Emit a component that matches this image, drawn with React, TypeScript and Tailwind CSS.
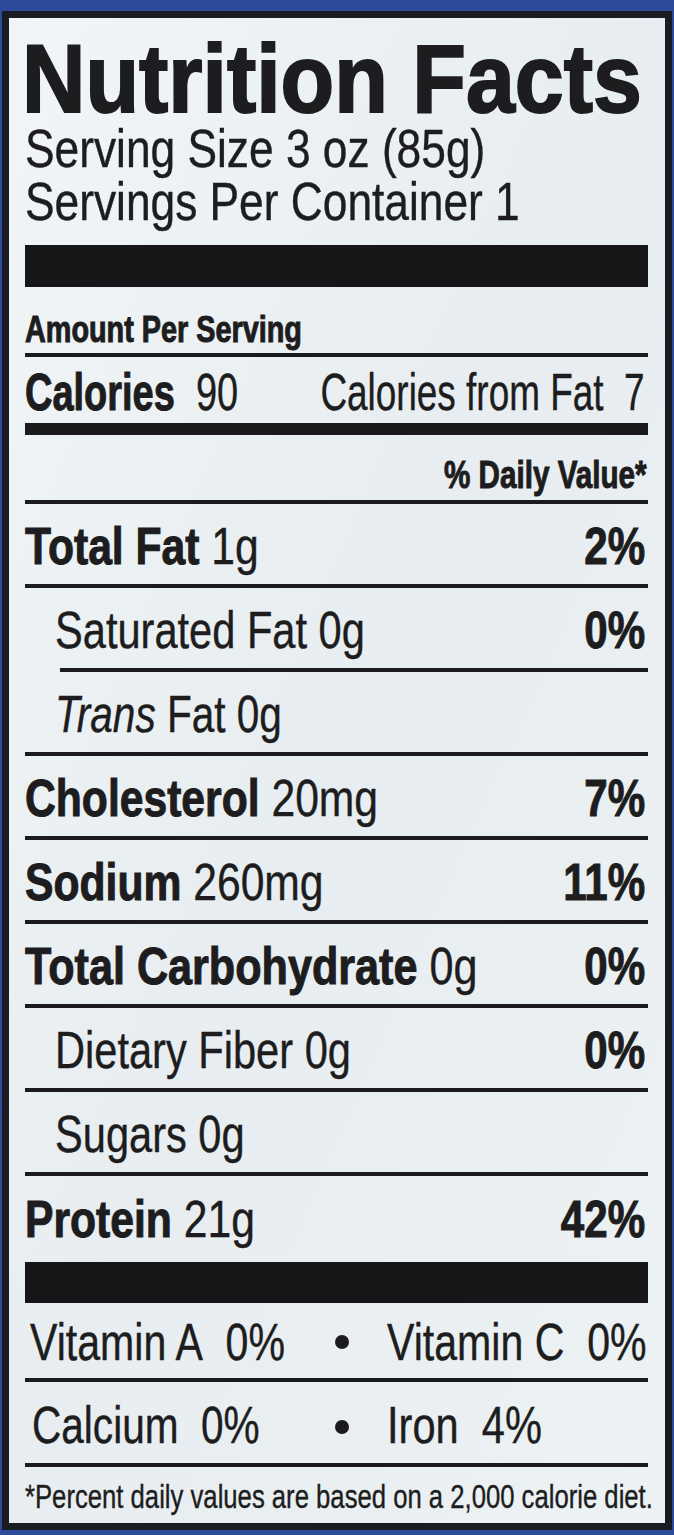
import React from 'react'

interface RowProps {
  left: React.ReactNode
  right?: string
  indent?: boolean
  scale?: string
}

const Rule = ({ className = '' }: { className?: string }) => (
  <div className={`h-[4px] bg-[#1b1b1d] ${className}`} />
)

const B = ({ children }: { children: React.ReactNode }) => (
  <b className="font-bold [-webkit-text-stroke:1px_#1d1d20]">{children}</b>
)

const NutrientRow = ({ left, right, indent, scale = 'scale-x-[0.82]' }: RowProps) => (
  <div className="flex h-[80px] items-end pb-[12px] text-[52px] leading-none">
    <div className={`min-w-0 flex-1 ${indent ? 'pl-[30px]' : ''}`}>
      <span className={`inline-block origin-left whitespace-nowrap ${scale}`}>{left}</span>
    </div>
    {right && (
      <div className="shrink-0 pr-[3px]">
        <span className="inline-block origin-right scale-x-[0.81] whitespace-nowrap">
          <B>{right}</B>
        </span>
      </div>
    )}
  </div>
)

const Bullet = ({ className = '' }: { className?: string }) => (
  <div className={`h-[14px] w-[14px] shrink-0 rounded-full bg-[#1b1b1d] ${className}`} />
)

export default function App() {
  return (
    <div className="h-[1535px] w-[674px] overflow-hidden bg-[#2c4b9a] px-[2px] pt-[11px] font-['Liberation_Sans',Arial,sans-serif] text-[#1d1d20] [-webkit-text-stroke:0.4px_#1d1d20]">
      <div className="h-[1519px] w-[670px] border-[7px] border-[#1a1c24] bg-linear-to-br from-[#f1f5f7] via-[#e7edf0] to-[#edf2f4] pl-[16px] pr-[17px]">
        {/* header */}
        <div className="-ml-[3px] mt-[18px] text-[96px] font-bold leading-[86px]">
          <span className="inline-block origin-left scale-x-[0.915] whitespace-nowrap [-webkit-text-stroke:2px_#1d1d20]">
            Nutrition Facts
          </span>
        </div>
        <div className="text-[54px] leading-[53px]">
          <div>
            <span className="inline-block origin-left scale-x-[0.82] whitespace-nowrap leading-[50px]">
              Serving Size 3 oz (85g)
            </span>
          </div>
          <div>
            <span className="inline-block origin-left scale-x-[0.82] whitespace-nowrap leading-[50px]">
              Servings Per Container 1
            </span>
          </div>
        </div>
        <div className="mt-[17px] h-[42px] bg-[#161618]" />

        <div className="mt-[25px] text-[36px] leading-none">
          <span className="inline-block origin-left scale-x-[0.8] whitespace-nowrap">
            <B>Amount Per Serving</B>
          </span>
        </div>
        <Rule className="mt-[5px]" />

        <div className="flex h-[66px] items-end pb-[5px] text-[52px] leading-none">
          <div className="min-w-0 flex-1">
            <span className="inline-block origin-left scale-x-[0.73] whitespace-nowrap">
              <B>Calories</B>{'\u00a0 '}90
            </span>
          </div>
          <div className="shrink-0 pr-[3px]">
            <span className="inline-block origin-right scale-x-[0.71] whitespace-nowrap">
              Calories from Fat{'\u00a0 '}7
            </span>
          </div>
        </div>
        <div className="h-[12px] bg-[#1b1b1d]" />

        <div className="flex h-[65px] items-end justify-end pb-[6px] pr-[1px] text-[39px] leading-none">
          <span className="inline-block origin-right scale-x-[0.76] whitespace-nowrap">
            <B>% Daily Value*</B>
          </span>
        </div>
        <Rule />

        {/* nutrients */}
        <NutrientRow left={<><B>Total Fat</B> 1g</>} right="2%" />
        <Rule />
        <NutrientRow left="Saturated Fat 0g" right="0%" indent scale="scale-x-[0.8]" />
        <Rule className="ml-[35px]" />
        <NutrientRow left={<><i>Trans</i> Fat 0g</>} indent scale="scale-x-[0.78]" />
        <Rule />
        <NutrientRow left={<><B>Cholesterol</B> 20mg</>} right="7%" />
        <Rule />
        <NutrientRow left={<><B>Sodium</B> 260mg</>} right="11%" />
        <Rule />
        <NutrientRow left={<><B>Total Carbohydrate</B> 0g</>} right="0%" scale="scale-x-[0.83]" />
        <Rule />
        <NutrientRow left="Dietary Fiber 0g" right="0%" indent scale="scale-x-[0.8]" />
        <Rule />
        <NutrientRow left="Sugars 0g" indent scale="scale-x-[0.8]" />
        <Rule />

        <div className="flex h-[86px] items-end pb-[17px] text-[52px] leading-none">
          <div className="min-w-0 flex-1">
            <span className="inline-block origin-left scale-x-[0.82] whitespace-nowrap">
              <B>Protein</B> 21g
            </span>
          </div>
          <div className="shrink-0 pr-[3px]">
            <span className="inline-block origin-right scale-x-[0.81]">
              <B>42%</B>
            </span>
          </div>
        </div>
        <div className="h-[41px] bg-[#161618]" />

        {/* vitamins */}
        <div className="flex h-[75px] items-end pb-[10px] text-[52px] leading-none">
          <div className="w-[310px] shrink-0 pl-[5px]">
            <span className="inline-block origin-left scale-x-[0.79] whitespace-nowrap">
              Vitamin A{'\u00a0 '}0%
            </span>
          </div>
          <Bullet className="mb-[19px]" />
          <div className="ml-[38px] min-w-0 flex-1">
            <span className="inline-block origin-left scale-x-[0.79] whitespace-nowrap">
              Vitamin C{'\u00a0 '}0%
            </span>
          </div>
        </div>
        <Rule />
        <div className="flex h-[81px] items-end pb-[12px] text-[52px] leading-none">
          <div className="w-[310px] shrink-0 pl-[7px]">
            <span className="inline-block origin-left scale-x-[0.78] whitespace-nowrap">
              Calcium{'\u00a0 '}0%
            </span>
          </div>
          <Bullet className="mb-[17px]" />
          <div className="ml-[38px] min-w-0 flex-1">
            <span className="inline-block origin-left scale-x-[0.8] whitespace-nowrap">
              Iron{'\u00a0 '}4%
            </span>
          </div>
        </div>
        <Rule />

        <div className="flex h-[56px] items-end pb-[10px] text-[34px] leading-none">
          <span className="inline-block origin-left scale-x-[0.755] whitespace-nowrap">
            *Percent daily values are based on a 2,000 calorie diet.
          </span>
        </div>
      </div>
    </div>
  )
}
